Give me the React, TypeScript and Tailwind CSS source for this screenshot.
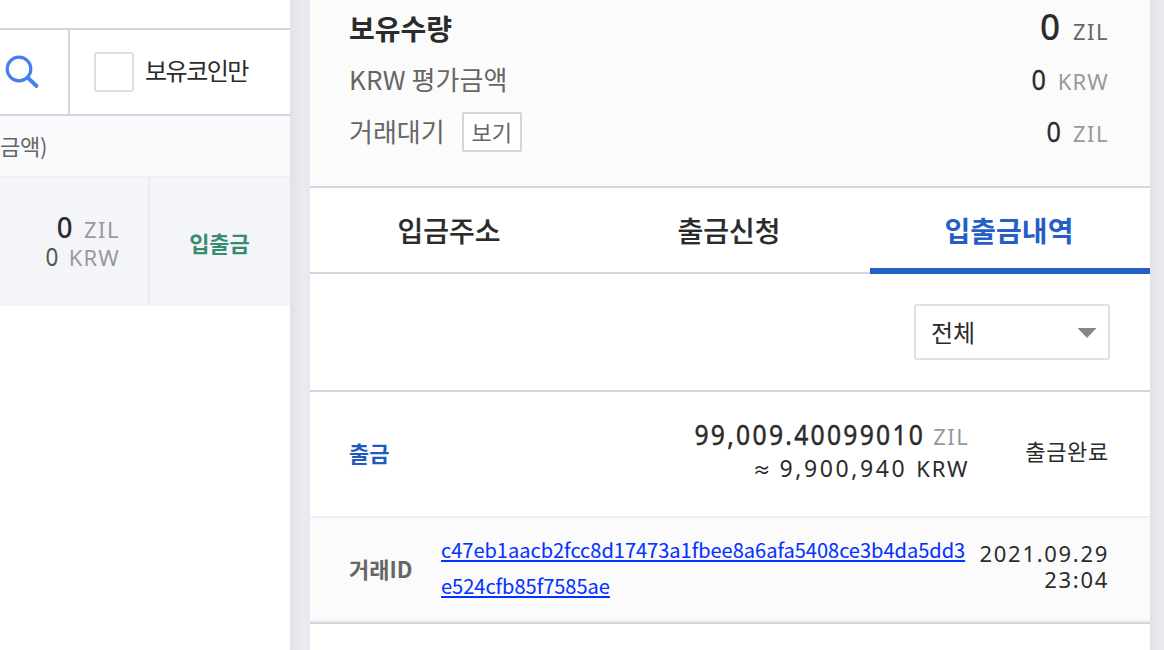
import React from "react";

const KR = "font-['Noto_Sans_CJK_KR',sans-serif]";
const NUM = "font-['Noto_Sans','Noto_Sans_CJK_KR',sans-serif]";

type AmountProps = {
    value: string;
    unit: string;
    valueClass: string;
    unitClass: string;
};

function Amount({ value, unit, valueClass, unitClass }: AmountProps) {
    return (
        <div className={`${NUM} flex items-baseline justify-end whitespace-nowrap`}>
            <span className={`origin-right ${valueClass}`}>{value}</span>
            <span className={unitClass}>{unit}</span>
        </div>
    );
}

function CoinList() {
    return (
        <aside className="flex w-[290px] shrink-0 flex-col overflow-hidden bg-white pt-7">
            <div className="flex h-[88px] border-y-2 border-[#d4d4dc]">
                <div className="flex w-[70px] shrink-0 items-center border-r-2 border-[#d4d4dc] pl-1">
                    <svg width="36" height="36" viewBox="0 0 36 36" fill="none" stroke="#4680ee">
                        <circle cx="15" cy="15" r="11.8" strokeWidth="3.2" />
                        <path d="M23.5 23.5 L32.5 32" strokeWidth="3.8" strokeLinecap="round" />
                    </svg>
                </div>
                <label className="flex items-center pl-6">
                    <span className="size-10 rounded-[3px] border-2 border-[#dfdfe6] bg-white" />
                    <span className="mb-1 ml-[11px] text-[24px] leading-8 tracking-[-1.5px] text-[#2b2b2b]">보유코인만</span>
                </label>
            </div>
            <div className="flex h-[62px] items-center border-b-2 border-[#f0f0f2] bg-[#f9fafc]">
                <span className="mb-0.5 text-[22px] leading-8 tracking-[-0.3px] text-[#666]">금액)</span>
            </div>
            <div className="flex h-32 bg-[#f4f5f9]">
                <div className="flex w-[150px] flex-col justify-center border-r-2 border-[#ebecf0] pr-[28px]">
                    <Amount
                        value="0"
                        unit="ZIL"
                        valueClass="scale-x-95 text-[29px] leading-7 font-medium text-[#2b2b2b]"
                        unitClass="ml-[11px] text-[22px] leading-7 tracking-[1.5px] text-[#999]"
                    />
                    <Amount
                        value="0"
                        unit="KRW"
                        valueClass="-mt-px scale-x-90 text-[25px] leading-7 text-[#555]"
                        unitClass="-mt-px ml-2.5 text-[22px] leading-7 tracking-[1.2px] text-[#999]"
                    />
                </div>
                <div className="flex flex-1 items-center justify-center pr-px text-[22px] font-bold text-[#378c70]">입출금</div>
            </div>
        </aside>
    );
}

function Summary() {
    return (
        <section className="h-[188px] border-b-2 border-[#d4d4dc] bg-[#fbfbfb] pr-[41px] pl-[39px]">
            <div className="flex h-[54px] items-center justify-between pt-0.5">
                <strong className="text-[28px] leading-10 font-bold text-[#2b2b2b]">보유수량</strong>
                <Amount
                    value="0"
                    unit="ZIL"
                    valueClass="scale-x-95 text-[37px] leading-10 font-medium text-[#2b2b2b]"
                    unitClass="ml-[13px] text-[22px] leading-10 tracking-[1.5px] text-[#666]"
                />
            </div>
            <div className="flex h-[52px] items-center justify-between">
                <span className="mb-0.5 text-[26px] leading-10 tracking-[0.1px] text-[#666]">KRW 평가금액</span>
                <Amount
                    value="0"
                    unit="KRW"
                    valueClass="scale-x-90 text-[28px] leading-10 text-[#2b2b2b] [-webkit-text-stroke:0.3px]"
                    unitClass="ml-3 text-[22px] leading-10 tracking-[1.2px] text-[#999]"
                />
            </div>
            <div className="flex h-[52px] items-center justify-between">
                <div className="flex items-center">
                    <span className="mb-0.5 text-[26px] leading-10 text-[#666]">거래대기</span>
                    <button className="ml-[17px] flex h-10 w-[60px] items-center justify-center rounded-[2px] border-2 border-[#d4d4dc] bg-white pb-0.5 text-[22px] text-[#666]">
                        보기
                    </button>
                </div>
                <Amount
                    value="0"
                    unit="ZIL"
                    valueClass="scale-x-90 text-[28px] leading-10 text-[#2b2b2b] [-webkit-text-stroke:0.3px]"
                    unitClass="ml-3 text-[22px] leading-10 tracking-[1.5px] text-[#999]"
                />
            </div>
        </section>
    );
}

function Tabs() {
    return (
        <nav className="flex h-[86px] text-[28px] font-medium text-[#2b2b2b]">
            <div className="flex flex-1 items-center justify-center border-b-2 border-[#d4d4dc] pr-0.5 [-webkit-text-stroke:0.2px]">입금주소</div>
            <div className="flex flex-1 items-center justify-center border-b-2 border-[#d4d4dc] pr-0.5 [-webkit-text-stroke:0.2px]">출금신청</div>
            <div className="flex flex-1 items-center justify-center border-b-6 border-[#255fc4] pt-1 pr-0.5 font-bold text-[#255fc4]">
                입출금내역
            </div>
        </nav>
    );
}

function History() {
    return (
        <>
            <div className="flex h-[118px] justify-end border-b-2 border-[#d4d4dc] pt-[30px] pr-10">
                <div className="flex h-14 w-[196px] items-center justify-between rounded-[3px] border-2 border-[#dfdfe6] pr-[11px] pl-[15px] text-[24px] text-[#2b2b2b]">
                    <span>전체</span>
                    <svg width="20" height="10" viewBox="0 0 20 10" className="mt-0.5">
                        <path d="M0.5 0 H19.5 L10 10 Z" fill="#85858c" />
                    </svg>
                </div>
            </div>
            <div className="flex h-[126px] items-center border-b-2 border-[#f0f0f2] pr-[41px] pb-1 pl-[39px]">
                <span className="text-[22px] font-bold text-[#1f59c2]">출금</span>
                <div className="-mt-0.5 ml-auto">
                    <Amount
                        value="99,009.40099010"
                        unit="ZIL"
                        valueClass="scale-x-[.88] text-[28px] leading-[34px] tracking-[2.6px] text-[#2b2b2b] [-webkit-text-stroke:0.5px]"
                        unitClass="ml-2 text-[22px] leading-[34px] tracking-[1.5px] text-[#999]"
                    />
                    <div className={`${NUM} -mt-0.5 flex items-baseline justify-end text-[22px] leading-[34px] tracking-[1.7px] text-[#2b2b2b]`}>
                        <span className={`${KR} mr-[7px] text-[18px] font-medium`}>≈</span>
                        <span className="text-[23px] tracking-[2.6px]">9,900,940</span>
                        <span className="ml-[9px]">KRW</span>
                    </div>
                </div>
                <span className="-mt-1 ml-[56px] text-[22px] tracking-[0.7px] text-[#2b2b2b]">출금완료</span>
            </div>
            <div className="flex h-[104px] border-b-2 border-[#f0f0f2] bg-[#fbfbfb] pr-[41px] pl-[39px]">
                <span className="mb-0.5 w-[92px] shrink-0 self-center text-[22px] font-bold text-[#666]">거래ID</span>
                <a href="#" className="mt-[14px] w-[528px] shrink-0 text-[20px] leading-9 text-[#0433ff] underline decoration-2 underline-offset-2 [-webkit-text-stroke:0.1px]">
                    c47eb1aacb2fcc8d17473a1fbee8a6afa5408ce3b4da5dd3
                    <br />
                    e524cfb85f7585ae
                </a>
                <div className={`${NUM} mt-[22px] flex flex-1 flex-col items-end text-[22px] leading-[26px] tracking-[1.7px] whitespace-nowrap text-[#2b2b2b]`}>
                    <span>2021.09.29</span>
                    <span>23:04</span>
                </div>
            </div>
            <div className="border-t-2 border-[#d4d4dc]" />
        </>
    );
}

export default function App() {
    return (
        <div className={`${KR} flex h-[650px] w-[1164px] overflow-hidden bg-[#e9eaef]`}>
            <CoinList />
            <div className="w-5 shrink-0 bg-linear-to-r from-[#e1e2e8] to-[#e9eaef] to-50%" />
            <main className="w-[840px] shrink-0 bg-white">
                <Summary />
                <Tabs />
                <History />
            </main>
            <div className="flex-1 bg-linear-to-r from-[#e1e2e8] to-[#e9eaef] to-70%" />
        </div>
    );
}
